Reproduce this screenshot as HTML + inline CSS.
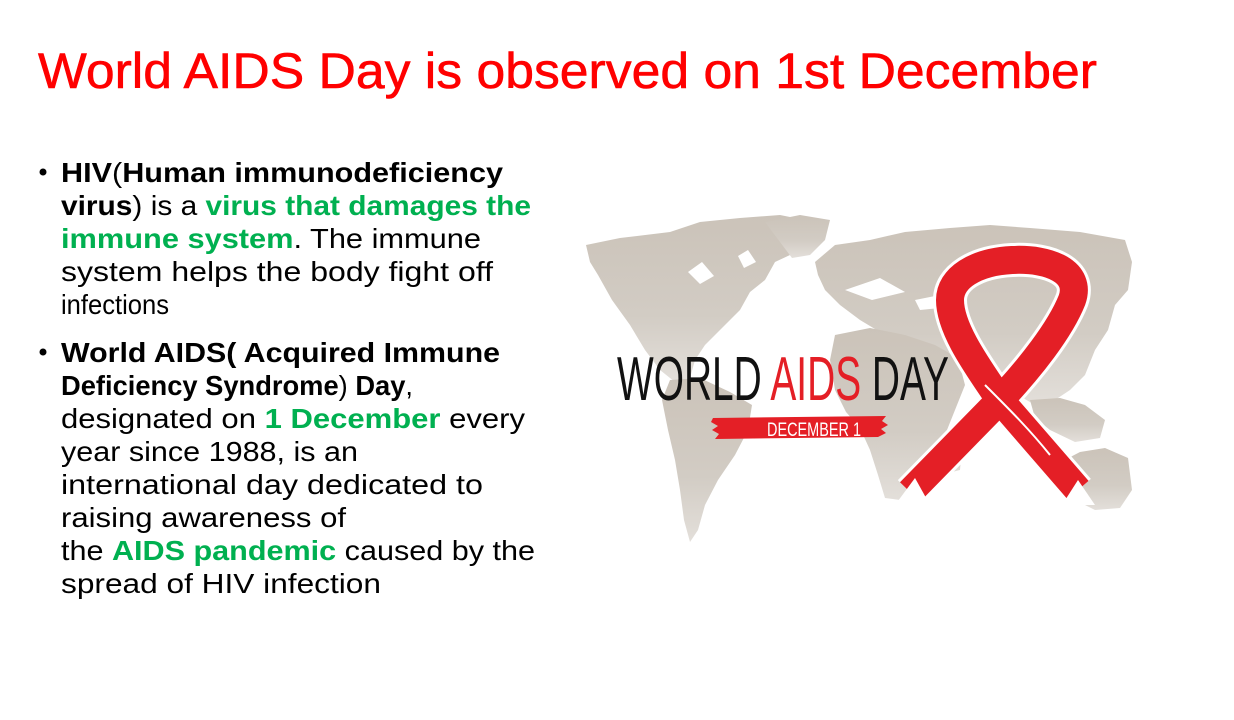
<!DOCTYPE html>
<html><head><meta charset="utf-8"><style>
html,body{margin:0;padding:0;background:#fff;width:1234px;height:720px;overflow:hidden}
svg{display:block}
</style></head><body>
<svg width="1234" height="720" viewBox="0 0 1234 720" xmlns="http://www.w3.org/2000/svg" font-family="Liberation Sans, sans-serif">
<defs>
<linearGradient id="mg" x1="0" y1="0" x2="0" y2="1">
<stop offset="0" stop-color="#cbc3b9"/><stop offset="0.6" stop-color="#d2ccc4"/><stop offset="1" stop-color="#e3dfda"/>
</linearGradient>
</defs>
<text x="38" y="88" font-size="50" fill="#ff0000" stroke="#ff0000" stroke-width="0.6" textLength="1059" lengthAdjust="spacingAndGlyphs">World AIDS Day is observed on  1st December</text>

<g font-size="28" fill="#000">
<circle cx="43" cy="172" r="3.5"/>
<circle cx="43" cy="352" r="3.5"/>
<text x="61" y="182" textLength="442" lengthAdjust="spacingAndGlyphs"><tspan font-weight="bold">HIV</tspan>(<tspan font-weight="bold">Human immunodeficiency</tspan></text>
<text x="61" y="215" textLength="470" lengthAdjust="spacingAndGlyphs"><tspan font-weight="bold">virus</tspan>) is a <tspan font-weight="bold" fill="#00b050">virus that damages the</tspan></text>
<text x="61" y="248" textLength="420" lengthAdjust="spacingAndGlyphs"><tspan font-weight="bold" fill="#00b050">immune system</tspan>. The immune</text>
<text x="61" y="281" textLength="432" lengthAdjust="spacingAndGlyphs">system helps the body fight off</text>
<text x="61" y="314" textLength="108" lengthAdjust="spacingAndGlyphs">infections</text>
<text x="61" y="362" textLength="439" lengthAdjust="spacingAndGlyphs" font-weight="bold">World AIDS( Acquired Immune</text>
<text x="61" y="395" textLength="352" lengthAdjust="spacingAndGlyphs"><tspan font-weight="bold">Deficiency Syndrome</tspan>) <tspan font-weight="bold">Day</tspan>,</text>
<text x="61" y="428" textLength="464" lengthAdjust="spacingAndGlyphs">designated on <tspan font-weight="bold" fill="#00b050">1 December</tspan> every</text>
<text x="61" y="461" textLength="297" lengthAdjust="spacingAndGlyphs">year since 1988, is an</text>
<text x="61" y="494" textLength="422" lengthAdjust="spacingAndGlyphs">international day dedicated to</text>
<text x="61" y="527" textLength="285" lengthAdjust="spacingAndGlyphs">raising awareness of</text>
<text x="61" y="560" textLength="474" lengthAdjust="spacingAndGlyphs">the <tspan font-weight="bold" fill="#00b050">AIDS pandemic</tspan> caused by the</text>
<text x="61" y="593" textLength="320" lengthAdjust="spacingAndGlyphs">spread of HIV infection</text>
</g>

<g fill="url(#mg)">
<path d="M586,245 L620,238 L670,232 L700,222 L740,218 L780,215 L815,222 L800,240 L790,255 L775,262 L765,280 L750,292 L740,310 L720,330 L705,345 L695,360 L690,378 L675,382 L660,370 L645,350 L630,325 L612,300 L598,275 L590,262 Z"/>
<path d="M765,222 L800,215 L830,220 L825,240 L810,255 L792,258 L780,242 Z"/>
<path d="M670,380 L700,378 L730,392 L752,405 L748,430 L735,455 L718,480 L705,505 L698,530 L690,542 L684,520 L680,490 L675,460 L668,430 L662,400 Z"/>
<path d="M815,262 L835,245 L870,240 L905,232 L950,228 L990,225 L1030,228 L1080,232 L1125,240 L1132,262 L1128,290 L1115,305 L1108,330 L1095,350 L1085,375 L1070,390 L1055,400 L1035,405 L1018,395 L1000,378 L985,365 L960,355 L935,350 L905,340 L880,332 L860,320 L840,305 L825,290 L818,275 Z"/>
<path d="M835,335 L870,328 L905,335 L935,345 L958,358 L965,385 L955,410 L945,435 L930,460 L915,485 L900,500 L885,498 L878,475 L870,450 L860,428 L846,412 L835,390 L830,360 Z"/>
<path d="M955,450 L962,445 L960,470 L952,472 Z"/>
<path d="M1030,400 L1060,398 L1085,405 L1105,420 L1100,438 L1075,442 L1050,430 L1035,418 Z"/>
<path d="M1055,465 L1080,452 L1105,448 L1128,458 L1132,490 L1120,508 L1095,510 L1075,500 L1060,490 Z"/>
</g>
<g fill="#fff">
<path d="M688,272 L702,262 L714,276 L700,284 Z"/>
<path d="M738,256 L748,250 L756,262 L744,268 Z"/>
<path d="M845,290 L880,278 L905,292 L872,300 Z"/>
<path d="M915,300 L935,296 L940,308 L920,310 Z"/>
</g>

<text x="617" y="400" font-size="62" fill="#111" textLength="332" lengthAdjust="spacingAndGlyphs">WORLD <tspan fill="#e41f26">AIDS</tspan> DAY</text>
<path d="M713,418 L886,416 L882,421 L888,425 L881,429 L886,433 L878,437 L715,439 L719,434 L712,430 L718,426 L711,422 Z" fill="#e41f26"/>
<text x="767" y="436" font-size="19" fill="#fff" textLength="94" lengthAdjust="spacingAndGlyphs">DECEMBER 1</text>

<g fill="none" stroke-linejoin="round">
<path d="M910,492 L1000,400 C1030,368 1060,330 1072,300 C1082,272 1050,258 1012,260 C975,262 950,278 950,300 C950,330 980,370 1000,400 L1078,490" stroke="#fff" stroke-width="34"/>
<path d="M910,492 L1000,400 C1030,368 1060,330 1072,300 C1082,272 1050,258 1012,260 C975,262 950,278 950,300 C950,330 980,370 1000,400 L1078,490" stroke="#e41f26" stroke-width="28"/>
<path d="M985,385 C1010,410 1030,430 1050,455" stroke="#fff" stroke-width="2"/>
</g>
<path d="M895,505 L915,478 L930,505 Z" fill="#fff"/>
<path d="M1062,505 L1078,480 L1095,505 Z" fill="#fff"/>
</svg>
</body></html>
